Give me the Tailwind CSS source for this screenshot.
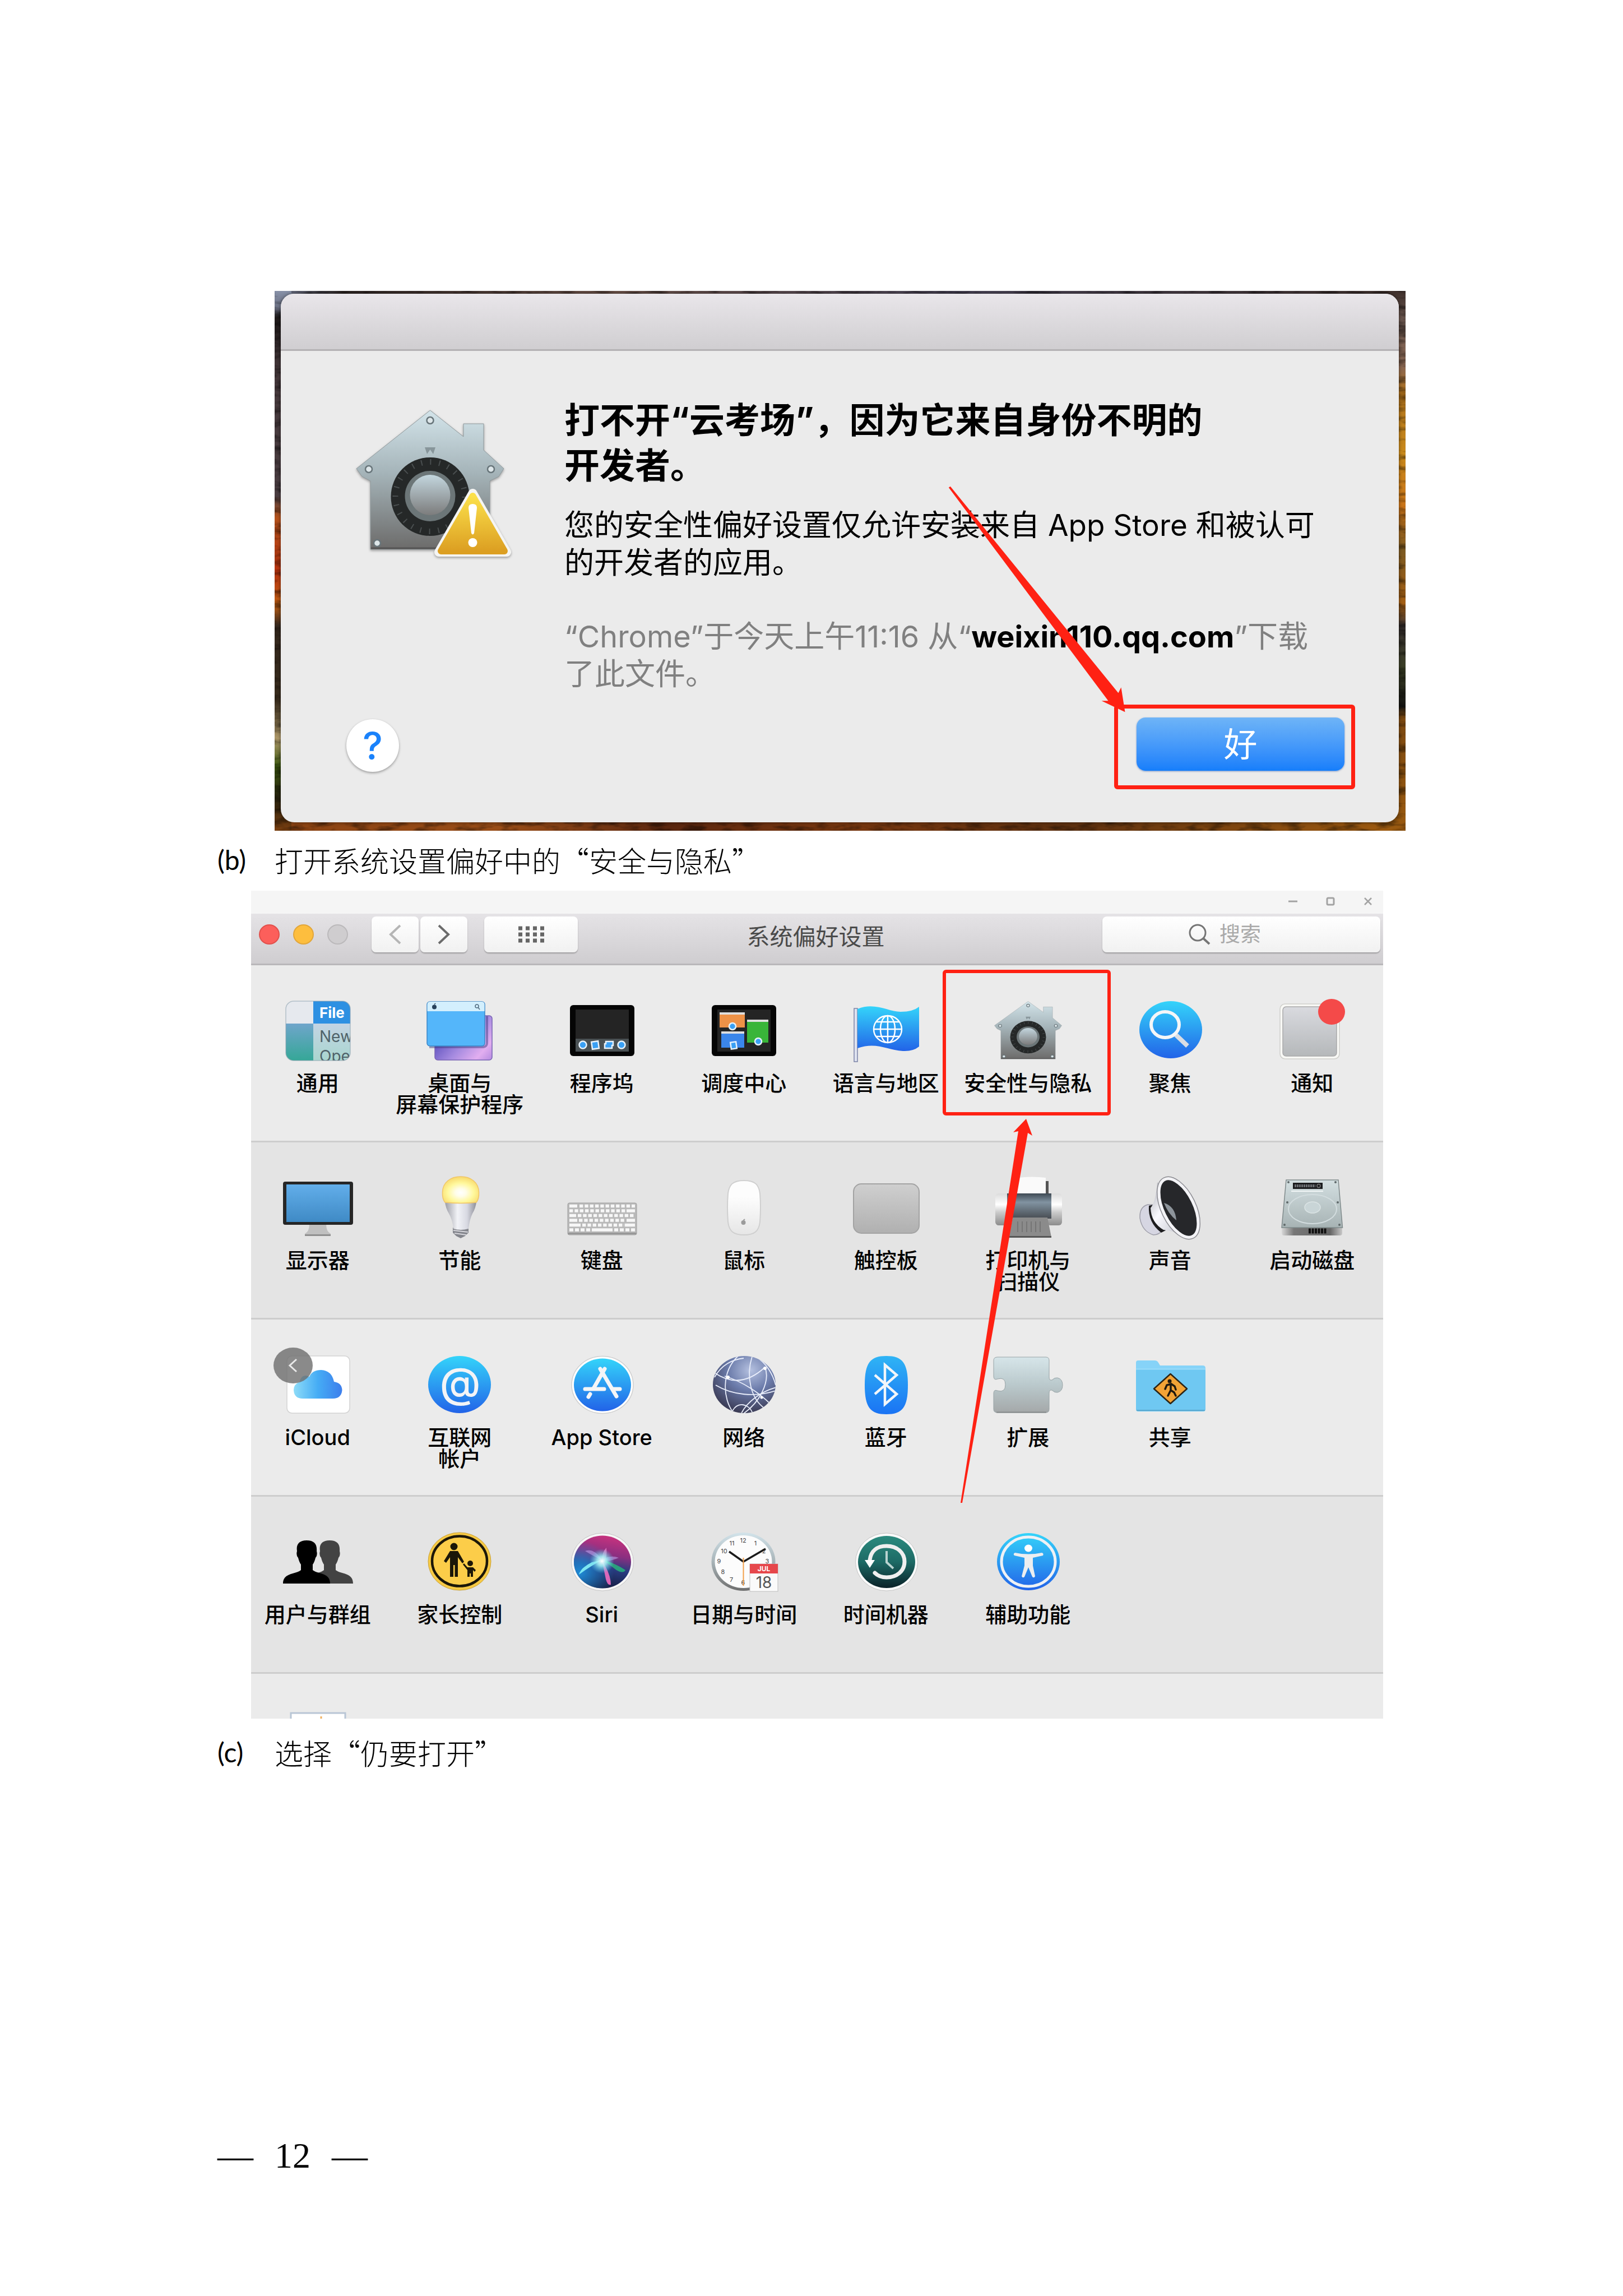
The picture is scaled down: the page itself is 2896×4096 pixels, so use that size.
<!DOCTYPE html>
<html lang="zh-CN">
<head>
    <meta charset="UTF-8">
    <meta name="viewport" content="width=device-width, initial-scale=1.0">
    <title>云考场安装说明 - 12</title>
    <script src="https://cdn.jsdelivr.net/npm/@tailwindcss/browser@4"></script>
</head>
<body class="bg-white text-black font-[Inter,'Noto_Sans_CJK_SC',sans-serif]">

    <!-- Shared gradients and symbols -->
    <svg class="absolute w-0 h-0" aria-hidden="true">
        <defs>
            <linearGradient id="blue" x1="0" y1="0" x2="0" y2="1"><stop offset="0" stop-color="#34d4fa"/><stop offset="1" stop-color="#2263e8"/></linearGradient>
            <linearGradient id="steel" x1="0" y1="0" x2="0" y2="1"><stop offset="0" stop-color="#d3e4ea"/><stop offset=".45" stop-color="#a5b4b9"/><stop offset="1" stop-color="#6c6b6a"/></linearGradient>
            <linearGradient id="knob" x1="0" y1="0" x2="0" y2="1"><stop offset="0" stop-color="#c3d6de"/><stop offset="1" stop-color="#7c7c7c"/></linearGradient>
            <linearGradient id="gray" x1="0" y1="0" x2="0" y2="1"><stop offset="0" stop-color="#cfcfcf"/><stop offset="1" stop-color="#b0b0b0"/></linearGradient>
            <linearGradient id="yellow" x1="0" y1="0" x2="0" y2="1"><stop offset="0" stop-color="#fbe04a"/><stop offset="1" stop-color="#dc9f22"/></linearGradient>
        </defs>
        <symbol id="house" viewBox="9 9 265 251" preserveAspectRatio="none">
            <path d="M141.500 10 L201 57 V34 H237 V81 L273 114 L264 128 L248 136 V258 H35 V136 L20 128 L10 114 Z" fill="url(#steel)" stroke="#8f999c" stroke-width="1"/>
            <path d="M36 256 H247" stroke="#555" stroke-width="3"/>
            <path d="M132 76 H151 L147 88 L141.500 80 L136 88 Z" fill="#87959a"/>
            <circle cx="141.500" cy="164" r="70" fill="#252828"/>
            <circle cx="141.500" cy="164" r="62" fill="none" stroke="#4a4f50" stroke-width="10" stroke-dasharray="2 14.200"/>
            <circle cx="141.500" cy="163" r="45" fill="#6c7678"/>
            <circle cx="141.500" cy="161" r="36" fill="url(#knob)"/>
            <g fill="#dde6e9" stroke="#68757a" stroke-width="2.500">
                <circle cx="141.500" cy="28" r="6"/><circle cx="32" cy="115" r="6"/><circle cx="250" cy="115" r="6"/><circle cx="47" cy="247" r="6"/><circle cx="236" cy="247" r="6"/>
            </g>
        </symbol>
    </svg>

    <main class="px-[388px] pt-[519px]">

        <!-- Gatekeeper alert -->
        <figure class="relative ml-[102px] pt-[5px] pr-3 pb-[15px] pl-[11px] bg-[#4a2b17]">
            <svg class="absolute inset-0 w-full h-full" viewBox="0 0 2018 964" preserveAspectRatio="none" aria-hidden="true">
                <defs>
                    <linearGradient id="wallL" x1="0" y1="0" x2="0" y2="1">
                        <stop offset="0" stop-color="#8791a8"/><stop offset=".03" stop-color="#6d7285"/><stop offset=".05" stop-color="#1f1a1a"/><stop offset=".15" stop-color="#46393c"/><stop offset=".38" stop-color="#4b3e42"/><stop offset=".42" stop-color="#b5521c"/><stop offset=".52" stop-color="#b8330f"/><stop offset=".58" stop-color="#c05f14"/><stop offset=".62" stop-color="#35281e"/><stop offset=".76" stop-color="#382c1d"/><stop offset=".83" stop-color="#b09a6a"/><stop offset=".88" stop-color="#3f5a12"/><stop offset=".94" stop-color="#26210e"/><stop offset="1" stop-color="#7a3f10"/>
                    </linearGradient>
                    <linearGradient id="wallR" x1="0" y1="0" x2="0" y2="1">
                        <stop offset="0" stop-color="#3f302c"/><stop offset=".06" stop-color="#6f5a52"/><stop offset=".14" stop-color="#8a6752"/><stop offset=".19" stop-color="#b0721c"/><stop offset=".3" stop-color="#c98a1c"/><stop offset=".4" stop-color="#c9741a"/><stop offset=".48" stop-color="#7c5a22"/><stop offset=".58" stop-color="#a55f14"/><stop offset=".62" stop-color="#3c3433"/><stop offset=".7" stop-color="#3a3f26"/><stop offset=".77" stop-color="#151412"/><stop offset=".79" stop-color="#7d4a12"/><stop offset="1" stop-color="#9a5a10"/>
                    </linearGradient>
                    <linearGradient id="wallT"><stop offset="0" stop-color="#77809a"/><stop offset=".06" stop-color="#2a2220"/><stop offset=".3" stop-color="#6b5148"/><stop offset=".6" stop-color="#494457"/><stop offset="1" stop-color="#3f302c"/></linearGradient>
                    <linearGradient id="wallB"><stop offset="0" stop-color="#8a4212"/><stop offset=".2" stop-color="#994d18"/><stop offset=".35" stop-color="#5a260f"/><stop offset=".5" stop-color="#7a3810"/><stop offset=".7" stop-color="#5d3010"/><stop offset="1" stop-color="#a05c10"/></linearGradient>
                    <filter id="grain" x="0" y="0" width="1" height="1"><feTurbulence type="fractalNoise" baseFrequency=".03 .09" numOctaves="3" seed="4"/><feColorMatrix values="0 0 0 0 0  0 0 0 0 0  0 0 0 0 0  0 0 0 3 -1.300"/></filter>
                </defs>
                <rect width="2018" height="12" fill="url(#wallT)"/>
                <rect y="940" width="2018" height="24" fill="url(#wallB)"/>
                <rect width="30" height="964" fill="url(#wallL)"/>
                <rect x="1988" width="30" height="964" fill="url(#wallR)"/>
                <rect width="2018" height="964" filter="url(#grain)" opacity=".4"/>
            </svg>

            <section class="relative rounded-[24px] overflow-hidden bg-[#ebebeb] shadow-[0_0_6px_rgba(0,0,0,0.5)]">
                <header class="h-[102px] border-b-3 border-[#b4b2b4] bg-linear-to-b from-[#e9e6ea] to-[#d0ced1]"></header>
                <div class="flex">
                    <div class="w-[506px] shrink-0 flex flex-col items-start justify-between pl-[117px] pt-24 pb-[90px]">
                        <svg class="ml-2 w-[300px] h-[280px] drop-shadow-[0_2px_2px_rgba(0,0,0,0.35)]" viewBox="0 0 300 280" role="img" aria-label="安全警告">
                            <use href="#house" x="9" y="9" width="265" height="251"/>
                            <circle cx="236" cy="247" r="9" fill="#6c6b6a"/>
                            <path d="M217.500 158 L278 263 H157 Z" fill="#f5f5f3" stroke="#f5f5f3" stroke-width="16" stroke-linejoin="round"/>
                            <path d="M217.500 163 L274 261 H161 Z" fill="url(#yellow)" stroke="url(#yellow)" stroke-width="12" stroke-linejoin="round"/>
                            <path d="M210 184 Q210 177 217.500 177 Q225 177 225 184 L220 229 Q217.500 234 215 229 Z" fill="#fff"/>
                            <circle cx="217.500" cy="246" r="8" fill="#fff"/>
                        </svg>
                        <button type="button" aria-label="帮助" class="w-[94px] h-[94px] rounded-full bg-white text-[#1a82fb] text-[68px] leading-none font-medium shadow-[0_2px_4px_rgba(0,0,0,0.35)]">?</button>
                    </div>
                    <div class="grow pt-[83px] pr-[97px] pb-[92px] flex flex-col items-start">
                        <h1 class="text-[63px] leading-[81px] font-bold whitespace-nowrap">打不开“云考场”，因为它来自身份不明的<br>开发者。</h1>
                        <p class="mt-[33px] text-[53px] leading-[67px] whitespace-nowrap">您的安全性偏好设置仅允许安装来自 App Store 和被认可<br>的开发者的应用。</p>
                        <p class="mt-16 text-[54px] leading-[67px] whitespace-nowrap text-[#808080]">“Chrome”于今天上午11:16 从“<b class="text-black">weixin110.qq.com</b>”下载<br>了此文件。</p>
                        <div class="relative mt-11 self-end">
                            <button type="button" class="block w-[371px] h-[95px] rounded-2xl bg-linear-to-b from-[#6eb4f7] to-[#157efb] text-white text-[60px] leading-none shadow-[0_1px_3px_rgba(0,60,160,0.5)]">好</button>
                            <span class="absolute -left-10 -right-[19px] -top-[23px] -bottom-[33px] border-7 border-[#ff2113] rounded-md pointer-events-none"></span>
                        </div>
                    </div>
                </div>
            </section>
            <svg class="absolute inset-0 w-full h-full pointer-events-none" viewBox="0 0 2018 964" aria-hidden="true">
                <path d="M1203 351 L1206 349 L1506 718 L1511 708 L1518 752 L1476 732 L1488 732 Z" fill="#ff2113"/>
            </svg>
        </figure>

        <p class="h-[107px] pb-1 flex items-center text-[51px] leading-[64px]">
            <span class="w-[102px] font-[Lato,sans-serif] text-[48px]">(b)</span>
            <span class="font-['Noto_Sans_CJK_SC',sans-serif] font-light">打开系统设置偏好中的“安全与隐私”</span>
        </p>

        <!-- System Preferences window -->
        <figure class="relative ml-[60px] mr-10 overflow-hidden bg-[#ebebeb]">
            <div class="h-[41px] bg-[#f5f5f5] flex justify-end items-center gap-[51px] pr-[19px] pb-1 text-[#a3a3a3]">
                <svg class="w-4 h-4" viewBox="0 0 16 16" fill="none" stroke="currentColor" stroke-width="3"><path d="M0 8 H16"/></svg>
                <svg class="w-4 h-4" viewBox="0 0 16 16" fill="none" stroke="currentColor" stroke-width="3"><rect x="2" y="2" width="12" height="12" rx="2"/></svg>
                <svg class="w-4 h-4" viewBox="0 0 16 16" fill="none" stroke="currentColor" stroke-width="2.500"><path d="M2 2 L14 14 M14 2 L2 14"/></svg>
            </div>

            <header class="h-[92px] grid grid-cols-[1fr_auto_1fr] items-start pt-[5px] pr-[5px] border-b-3 border-[#b9b7ba] bg-linear-to-b from-[#e5e3e6] to-[#cfcdd0]">
                <div class="h-16 flex items-center pl-[14px]">
                    <div class="flex gap-6">
                        <span class="w-[37px] h-9 rounded-[50%] bg-[#fc5f5b] border-2 border-[#e2504c]"></span>
                        <span class="w-[37px] h-9 rounded-[50%] bg-[#fdbe3e] border-2 border-[#e2a63a]"></span>
                        <span class="w-[37px] h-9 rounded-[50%] bg-[#cfcdcf] border-2 border-[#bbb9bb]"></span>
                    </div>
                    <button type="button" aria-label="后退" class="ml-[42px] w-[84px] h-16 rounded-lg bg-linear-to-b from-white to-[#f1f1f1] shadow-[0_2px_2px_rgba(0,0,0,0.25)] flex items-center justify-center">
                        <svg class="w-6 h-9" viewBox="0 0 24 36" fill="none" stroke="#b5b5b5" stroke-width="4"><path d="M21 2 L4 18 L21 34"/></svg>
                    </button>
                    <button type="button" aria-label="前进" class="ml-[3px] w-[84px] h-16 rounded-lg bg-linear-to-b from-white to-[#f1f1f1] shadow-[0_2px_2px_rgba(0,0,0,0.25)] flex items-center justify-center">
                        <svg class="w-6 h-9" viewBox="0 0 24 36" fill="none" stroke="#6b6b6b" stroke-width="4"><path d="M3 2 L20 18 L3 34"/></svg>
                    </button>
                    <button type="button" aria-label="显示全部" class="ml-[30px] w-[167px] h-16 rounded-lg bg-linear-to-b from-white to-[#f1f1f1] shadow-[0_2px_2px_rgba(0,0,0,0.25)] flex items-center justify-center">
                        <svg class="w-[46px] h-[30px]" viewBox="0 0 46 30" stroke="#666" stroke-width="7" stroke-dasharray="7 6"><path d="M0 4 H46 M0 15 H46 M0 26 H46"/></svg>
                    </button>
                </div>
                <h2 class="mt-1 text-[41px] leading-[64px] text-[#4a4a4a]">系统偏好设置</h2>
                <label class="justify-self-end w-[496px] h-16 rounded-lg bg-linear-to-b from-white to-[#f1f1f1] shadow-[0_2px_2px_rgba(0,0,0,0.25)] flex items-center pl-[153px] gap-4">
                    <svg class="w-10 h-10 shrink-0" viewBox="0 0 40 40" fill="none" stroke="#757575" stroke-width="3"><circle cx="17" cy="17" r="14"/><path d="M27 27 L38 37" stroke-width="4"/></svg>
                    <input type="search" aria-label="搜索" placeholder="搜索" class="w-60 h-16 bg-transparent outline-none text-[37px] leading-[64px] placeholder:text-[#a9a9a9]">
                </label>
            </header>

            <!-- Personal -->
            <div class="-ml-2 h-[316px] grid grid-cols-8 items-start border-b-3 border-[#cdcdcd]">
                <button type="button" class="pt-[51px] flex flex-col items-center gap-[10px] text-[38px] leading-[38px] font-medium whitespace-nowrap">
                    <svg class="w-40 h-[130px]" viewBox="0 0 160 130">
                        <defs>
                            <clipPath id="genClip"><rect x="23" y="13" width="115" height="106" rx="14"/></clipPath>
                            <linearGradient id="genL" x1="0" y1="0" x2="0" y2="1"><stop offset="0" stop-color="#6fa5cb"/><stop offset="1" stop-color="#35a797"/></linearGradient>
                            <linearGradient id="genR" x1="0" y1="0" x2="0" y2="1"><stop offset="0" stop-color="#c3d4e4"/><stop offset="1" stop-color="#a9d6cf"/></linearGradient>
                        </defs>
                        <g clip-path="url(#genClip)">
                            <rect x="23" y="13" width="49" height="40" fill="#e6e9ee"/>
                            <rect x="72" y="13" width="66" height="40" fill="#2d90e2"/>
                            <rect x="23" y="53" width="49" height="66" fill="url(#genL)"/>
                            <rect x="72" y="53" width="66" height="66" fill="url(#genR)"/>
                            <text x="83" y="43" font-size="26" font-weight="700" fill="#fff">File</text>
                            <text x="83" y="86" font-size="28" font-weight="400" fill="#4f6269">New</text>
                            <text x="83" y="121" font-size="28" font-weight="400" fill="#4f6269">Open</text>
                        </g>
                        <rect x="23" y="13" width="115" height="106" rx="14" fill="none" stroke="#8fa3b0" stroke-opacity=".6" stroke-width="1.500"/>
                    </svg>
                    <span>通用</span>
                </button>
                <button type="button" class="pt-[51px] flex flex-col items-center gap-[10px] text-[38px] leading-[38px] font-medium whitespace-nowrap">
                    <svg class="w-40 h-[130px]" viewBox="0 0 160 130">
                        <defs><linearGradient id="desk" x1="0" y1=".3" x2="1" y2="1"><stop offset=".2" stop-color="#6a5bc4"/><stop offset=".5" stop-color="#a68be0"/><stop offset=".8" stop-color="#e2aef0"/><stop offset="1" stop-color="#b58be0"/></linearGradient></defs>
                        <rect x="36" y="39" width="102" height="79" rx="5" fill="url(#desk)" stroke="#7a64b5" stroke-width="1.500"/>
                        <path d="M26 95 H122 Q129 94 129 88 V40" fill="none" stroke="#3a3578" stroke-opacity=".45" stroke-width="4"/>
                        <rect x="22" y="14" width="103" height="79" rx="5" fill="#54b6fa" stroke="#3a86c8" stroke-width="1.500"/>
                        <path d="M22.500 31 V19 Q22.500 14 28 14 H119 Q124.500 14 124.500 19 V31 Z" fill="#d3effd"/>
                        <ellipse cx="35" cy="23.500" rx="4" ry="4" fill="#27425c"/><path d="M35 19 L37 17" stroke="#27425c" stroke-width="1.500"/>
                        <circle cx="111" cy="22" r="3" fill="none" stroke="#536d80" stroke-width="1.500"/><path d="M113 24 L116 28" stroke="#536d80" stroke-width="1.500"/>
                    </svg>
                    <span>桌面与<br>屏幕保护程序</span>
                </button>
                <button type="button" class="pt-[51px] flex flex-col items-center gap-[10px] text-[38px] leading-[38px] font-medium whitespace-nowrap">
                    <svg class="w-40 h-[130px]" viewBox="0 0 160 130">
                        <rect x="23" y="20" width="115" height="91" rx="6" fill="#050505"/>
                        <rect x="33" y="28" width="95" height="75" fill="#242424"/>
                        <rect x="33" y="80" width="95" height="23" fill="#4a5154"/>
                        <g fill="#3aa0f4" stroke="#e8f2fa" stroke-width="2.500">
                            <circle cx="46" cy="91" r="6.500"/><rect x="62" y="85" width="12" height="13" transform="rotate(-8 68 91)"/>
                            <path d="M87 85 H100 V92 H98 V97 H85 V89 H87 Z"/><circle cx="115" cy="91" r="6.500"/>
                        </g>
                    </svg>
                    <span>程序坞</span>
                </button>
                <button type="button" class="pt-[51px] flex flex-col items-center gap-[10px] text-[38px] leading-[38px] font-medium whitespace-nowrap">
                    <svg class="w-40 h-[130px]" viewBox="0 0 160 130">
                        <rect x="23" y="20" width="115" height="91" rx="6" fill="#050505"/>
                        <rect x="33" y="28" width="95" height="75" fill="#242424"/>
                        <rect x="37" y="33" width="45" height="27" fill="#ee9247"/><rect x="37" y="33" width="45" height="4" fill="#dedede"/>
                        <rect x="86" y="46" width="38" height="41" fill="#39b539"/><rect x="86" y="46" width="38" height="4" fill="#dedede"/>
                        <rect x="40" y="67" width="41" height="29" fill="#3b86ea"/><rect x="40" y="67" width="41" height="4" fill="#dedede"/>
                        <g fill="#3aa0f4" stroke="#e8f2fa" stroke-width="2.500"><circle cx="60" cy="58" r="6"/><circle cx="106" cy="85" r="6"/><rect x="57" y="86" width="10" height="12" transform="rotate(-8 62 92)"/></g>
                    </svg>
                    <span>调度中心</span>
                </button>
                <button type="button" class="pt-[51px] flex flex-col items-center gap-[10px] text-[38px] leading-[38px] font-medium whitespace-nowrap">
                    <svg class="w-40 h-[130px]" viewBox="0 0 160 130">
                        <rect x="23" y="26" width="6" height="95" fill="#dfe3f0" stroke="#7b83a6" stroke-width="1.500"/>
                        <path d="M29 27 C60 14 84 32 106 32 Q128 32 139 23 V94 Q128 103 110 102 C82 100 62 85 29 97 Z" fill="url(#blue)"/>
                        <g fill="none" stroke="#fff" stroke-width="2.500">
                            <ellipse cx="83" cy="63" rx="25" ry="24"/><ellipse cx="83" cy="63" rx="13" ry="24"/><path d="M83 39 V87 M58 63 H108 M62 50 H104 M62 76 H104"/>
                        </g>
                    </svg>
                    <span>语言与地区</span>
                </button>
                <button type="button" class="relative pt-[51px] flex flex-col items-center gap-[10px] text-[38px] leading-[38px] font-medium whitespace-nowrap">
                    <svg class="w-40 h-[130px]" viewBox="0 0 160 130"><use href="#house" x="20" y="13" width="121" height="104"/></svg>
                    <span>安全性与隐私</span>
                    <span class="absolute -left-[26px] top-2 w-[300px] h-[260px] border-6 border-[#ff2113] rounded-md"></span>
                </button>
                <button type="button" class="pt-[51px] flex flex-col items-center gap-[10px] text-[38px] leading-[38px] font-medium whitespace-nowrap">
                    <svg class="w-40 h-[130px]" viewBox="0 0 160 130">
                        <ellipse cx="81" cy="64" rx="56" ry="51" fill="url(#blue)"/>
                        <path d="M90 73 L111 93" stroke="#d9dde4" stroke-width="8"/>
                        <ellipse cx="71" cy="55" rx="25" ry="23" fill="none" stroke="#f4f6f8" stroke-width="6"/>
                    </svg>
                    <span>聚焦</span>
                </button>
                <button type="button" class="pt-[51px] flex flex-col items-center gap-[10px] text-[38px] leading-[38px] font-medium whitespace-nowrap">
                    <svg class="w-40 h-[130px]" viewBox="0 0 160 130">
                        <defs><linearGradient id="note" x1="0" y1="0" x2="0" y2="1"><stop offset="0" stop-color="#d9dadf"/><stop offset="1" stop-color="#b5b8ba"/></linearGradient></defs>
                        <rect x="23" y="18" width="106" height="98" rx="9" fill="#f8f8f5" stroke="#cfcfcb" stroke-width="1.500"/>
                        <rect x="28" y="23" width="96" height="88" rx="6" fill="url(#note)" stroke="#a9a9aa" stroke-width="1.500"/>
                        <ellipse cx="115" cy="32" rx="24" ry="23" fill="#f44a49"/>
                    </svg>
                    <span>通知</span>
                </button>
            </div>

            <!-- Hardware -->
            <div class="-ml-2 h-[316px] grid grid-cols-8 items-start border-b-3 border-[#cdcdcd] bg-[#e4e4e4]">
                <button type="button" class="pt-[51px] flex flex-col items-center gap-[10px] text-[38px] leading-[38px] font-medium whitespace-nowrap">
                    <svg class="w-40 h-[130px]" viewBox="0 0 160 130">
                        <defs><linearGradient id="scr" x1="0" y1="0" x2="0" y2="1"><stop offset="0" stop-color="#62aeea"/><stop offset="1" stop-color="#3f8ac5"/></linearGradient></defs>
                        <path d="M65 95 H95 Q95 108 103 112 V116 H57 V112 Q65 108 65 95 Z" fill="#c0c0c0"/><path d="M57 114.500 H103" stroke="#8f8f8f" stroke-width="3"/>
                        <rect x="18" y="19" width="125" height="77" rx="4" fill="#262626"/>
                        <rect x="24" y="24" width="113" height="67" fill="url(#scr)"/>
                    </svg>
                    <span>显示器</span>
                </button>
                <button type="button" class="pt-[51px] flex flex-col items-center gap-[10px] text-[38px] leading-[38px] font-medium whitespace-nowrap">
                    <svg class="w-40 h-[130px]" viewBox="0 0 160 130">
                        <defs>
                            <radialGradient id="glow" cx=".5" cy=".6" r=".6"><stop offset="0" stop-color="#fff"/><stop offset=".25" stop-color="#fffde8"/><stop offset=".6" stop-color="#fff89c"/><stop offset="1" stop-color="#f8d86a"/></radialGradient>
                            <linearGradient id="cone"><stop offset="0" stop-color="#9c9da5"/><stop offset=".4" stop-color="#f2f3f7"/><stop offset=".7" stop-color="#d8d9e2"/><stop offset="1" stop-color="#8e8f98"/></linearGradient>
                        </defs>
                        <path d="M68 101 H96 V110 L90 116 L82 120 L74 116 L68 110 Z" fill="#83858c"/><path d="M69 106 L95 109 M71 111 L92 114" stroke="#d7d7dc" stroke-width="2"/>
                        <path d="M54 55 H110 Q109 66 103 76 Q98 86 96 103 Q82 107 69 103 Q67 86 61 76 Q55 66 54 55 Z" fill="url(#cone)"/>
                        <path d="M54 56 Q49 50 49.500 38 C50 20 64 10 82 10 C100 10 114 20 114.500 38 Q115 50 110 56 Q82 59 54 56 Z" fill="url(#glow)" stroke="#f0c668" stroke-width="1.500"/>
                    </svg>
                    <span>节能</span>
                </button>
                <button type="button" class="pt-[51px] flex flex-col items-center gap-[10px] text-[38px] leading-[38px] font-medium whitespace-nowrap">
                    <svg class="w-40 h-[130px]" viewBox="0 0 160 130">
                        <rect x="19" y="57" width="123" height="57" rx="3" fill="#b9b9b9" stroke="#a0a0a0" stroke-width="1"/>
                        <path d="M19.500 111.500 H141.500" stroke="#989898" stroke-width="3"/>
                        <g stroke="#f7f7f7" stroke-width="5.500">
                            <path d="M22 62.500 H36"/><path d="M40 62.500 H139" stroke-dasharray="6.400 2.900"/>
                            <path d="M22 71 H122" stroke-dasharray="6.400 2.900"/><path d="M124 71 H139"/>
                            <path d="M22 79.500 H34"/><path d="M37 79.500 H139" stroke-dasharray="6.400 2.900"/>
                            <path d="M22 88 H36"/><path d="M39 88 H122" stroke-dasharray="6.400 2.900"/><path d="M124 88 H139"/>
                            <path d="M22 96.500 H42"/><path d="M45 96.500 H120" stroke-dasharray="6.400 2.900"/><path d="M121 96.500 H139"/>
                            <path d="M22 105 H60" stroke-dasharray="7 3"/><path d="M62 105 H99"/><path d="M102 105 H139" stroke-dasharray="7 3"/>
                        </g>
                    </svg>
                    <span>键盘</span>
                </button>
                <button type="button" class="pt-[51px] flex flex-col items-center gap-[10px] text-[38px] leading-[38px] font-medium whitespace-nowrap">
                    <svg class="w-40 h-[130px]" viewBox="0 0 160 130">
                        <defs><linearGradient id="mouse" x1="0" y1="0" x2="0" y2="1"><stop offset=".3" stop-color="#fdfdfd"/><stop offset="1" stop-color="#e6e6e6"/></linearGradient></defs>
                        <path d="M80.500 17 C101 17 107 25 109 40 Q111 65 109 91 C107 107 100 114 80.500 114 C61 114 54 107 52 91 Q50 65 52 40 C54 25 60 17 80.500 17 Z" fill="url(#mouse)" stroke="#cfcfcf" stroke-width="2"/>
                        <ellipse cx="79.500" cy="92" rx="4" ry="4" fill="#9b9b9b"/><path d="M79.500 88 L82 86" stroke="#9b9b9b" stroke-width="2"/>
                    </svg>
                    <span>鼠标</span>
                </button>
                <button type="button" class="pt-[51px] flex flex-col items-center gap-[10px] text-[38px] leading-[38px] font-medium whitespace-nowrap">
                    <svg class="w-40 h-[130px]" viewBox="0 0 160 130"><rect x="22" y="23" width="117" height="88" rx="14" fill="url(#gray)" stroke="#a3a3a3" stroke-width="2"/></svg>
                    <span>触控板</span>
                </button>
                <button type="button" class="pt-[51px] flex flex-col items-center gap-[10px] text-[38px] leading-[38px] font-medium whitespace-nowrap">
                    <svg class="w-40 h-[130px]" viewBox="0 0 160 130">
                        <defs>
                            <linearGradient id="prtS" x1="0" y1="0" x2="0" y2="1"><stop offset="0" stop-color="#dcdcdc"/><stop offset=".35" stop-color="#fff"/><stop offset=".6" stop-color="#c9c9c9"/><stop offset="1" stop-color="#8c8c8c"/></linearGradient>
                            <linearGradient id="prtM" x1="0" y1="0" x2="0" y2="1"><stop offset="0" stop-color="#3f4a54"/><stop offset=".35" stop-color="#8193a1"/><stop offset="1" stop-color="#474c52"/></linearGradient>
                        </defs>
                        <rect x="110" y="18" width="7" height="24" fill="#555"/>
                        <path d="M50 14 Q82 8 112 12 V44 H48 Z" fill="#fafafa"/>
                        <rect x="22" y="40" width="28" height="57" rx="6" fill="url(#prtS)"/><rect x="114" y="40" width="27" height="57" rx="6" fill="url(#prtS)"/>
                        <rect x="43" y="40" width="79" height="45" fill="url(#prtM)"/>
                        <path d="M53 83 H115 L122 118 H46 Z" fill="#8b8b8b"/><path d="M46 117.500 H122" stroke="#565656" stroke-width="3"/>
                        <path d="M62 90 V109 M70 90 V109 M78 90 V109 M86 90 V109 M94 90 V109 M102 90 V109" stroke="#757575" stroke-width="2"/>
                    </svg>
                    <span>打印机与<br>扫描仪</span>
                </button>
                <button type="button" class="pt-[51px] flex flex-col items-center gap-[10px] text-[38px] leading-[38px] font-medium whitespace-nowrap">
                    <svg class="w-40 h-[130px]" viewBox="0 0 160 130">
                        <defs><linearGradient id="spk" x1="0" y1="0" x2="1" y2="1"><stop offset="0" stop-color="#a9aab2"/><stop offset=".4" stop-color="#fafaff"/><stop offset="1" stop-color="#b2b3bd"/></linearGradient></defs>
                        <path d="M40 60 Q25 64 26 84 Q30 108 50 114 Q60 114 66 106 L48 60 Z" fill="#d6d6e2" stroke="#9d9da8" stroke-width="1.500"/>
                        <path d="M42 62 Q40 92 64 110 L72 106 L50 60 Z" fill="#1d1d1f"/>
                        <path d="M57 20 Q54 56 45 66 Q46 92 68 105 Q92 108 114 118 L92 60 Z" fill="url(#spk)"/>
                        <ellipse cx="95" cy="66" rx="28" ry="57" transform="rotate(-26 95 66)" fill="#26272a" stroke="#f3f3f6" stroke-width="6"/>
                        <ellipse cx="95" cy="66" rx="31" ry="60" transform="rotate(-26 95 66)" fill="none" stroke="#8a8a90" stroke-width="1.500"/>
                        <path d="M69 57 Q89 63 91 88 Q76 76 69 57 Z" fill="#8d949b"/>
                    </svg>
                    <span>声音</span>
                </button>
                <button type="button" class="pt-[51px] flex flex-col items-center gap-[10px] text-[38px] leading-[38px] font-medium whitespace-nowrap">
                    <svg class="w-40 h-[130px]" viewBox="0 0 160 130">
                        <defs>
                            <linearGradient id="hdd" x1="0" y1="0" x2="0" y2="1"><stop offset="0" stop-color="#d3dfe1"/><stop offset="1" stop-color="#a7b3b4"/></linearGradient>
                            <linearGradient id="hddF"><stop offset="0" stop-color="#d8d8d8"/><stop offset=".2" stop-color="#777"/><stop offset=".8" stop-color="#666"/><stop offset="1" stop-color="#c8c8c8"/></linearGradient>
                        </defs>
                        <path d="M26 100 H134 V111 Q134 115 130 115 H30 Q26 115 26 111 Z" fill="url(#hddF)"/><path d="M74 107 H107" stroke="#111" stroke-width="9" stroke-dasharray="4 1.500"/>
                        <path d="M34 16 H127 L134.500 101 H26 Z" fill="url(#hdd)" stroke="#7f8a8b" stroke-width="1.500"/>
                        <rect x="46" y="21" width="53" height="11" fill="#1a1c1e"/><path d="M49 26.500 H86" stroke="#6b6f73" stroke-width="5" stroke-dasharray="3 1"/><circle cx="92" cy="26.500" r="3" fill="none" stroke="#777" stroke-width="1.500"/>
                        <path d="M43 36 H100" stroke="#f1f6f6" stroke-width="2"/>
                        <ellipse cx="81" cy="68" rx="43" ry="26" fill="none" stroke="#d3dddf" stroke-width="2"/><ellipse cx="81" cy="65" rx="14" ry="10" fill="#c9d5d7" stroke="#dbe4e5" stroke-width="1.500"/>
                        <g fill="#5f6869"><circle cx="38" cy="20" r="2"/><circle cx="122" cy="20" r="2"/><circle cx="36" cy="56" r="2"/><circle cx="126" cy="56" r="2"/><circle cx="31" cy="96" r="2"/><circle cx="129" cy="96" r="2"/></g>
                    </svg>
                    <span>启动磁盘</span>
                </button>
            </div>

            <!-- Internet & wireless -->
            <div class="-ml-2 h-[316px] grid grid-cols-8 items-start border-b-3 border-[#cdcdcd]">
                <button type="button" class="pt-[51px] flex flex-col items-center gap-[10px] text-[38px] leading-[38px] font-medium whitespace-nowrap">
                    <svg class="w-40 h-[130px] overflow-visible" viewBox="0 0 160 130">
                        <defs><linearGradient id="cloud"><stop offset="0" stop-color="#8edcf8"/><stop offset=".5" stop-color="#45acf5"/><stop offset="1" stop-color="#3d7eec"/></linearGradient></defs>
                        <rect x="25" y="14" width="112" height="102" rx="9" fill="#fff" stroke="#d3d3d3" stroke-width="1.500"/>
                        <path d="M53 90 Q38 90 37 75 Q37 64 48 60 Q49 50 58 49 Q62 49 65 51 Q70 39 86 39 Q105 40 109 60 Q123 62 123.500 75 Q122 90 107 90 Z" fill="url(#cloud)"/>
                        <ellipse cx="36" cy="31" rx="35" ry="32" fill="#6d6d6d" fill-opacity=".8"/>
                        <path d="M42 20 L30 31 L42 42" fill="none" stroke="#e8e8e8" stroke-width="3"/>
                    </svg>
                    <span>iCloud</span>
                </button>
                <button type="button" class="pt-[51px] flex flex-col items-center gap-[10px] text-[38px] leading-[38px] font-medium whitespace-nowrap">
                    <svg class="w-40 h-[130px]" viewBox="0 0 160 130">
                        <ellipse cx="80" cy="65" rx="56" ry="51" fill="url(#blue)"/>
                        <text x="81" y="88" font-size="74" font-weight="500" text-anchor="middle" fill="#f3f4f6">@</text>
                    </svg>
                    <span>互联网<br>帐户</span>
                </button>
                <button type="button" class="pt-[51px] flex flex-col items-center gap-[10px] text-[38px] leading-[38px] font-medium whitespace-nowrap">
                    <svg class="w-40 h-[130px]" viewBox="0 0 160 130">
                        <ellipse cx="81" cy="65.500" rx="55" ry="51" fill="#fff" stroke="#cfcfcf" stroke-width="1.500"/>
                        <ellipse cx="81" cy="65.500" rx="51" ry="47" fill="url(#blue)"/>
                        <g stroke="#f4f5f7" stroke-width="7" stroke-linecap="round" fill="none">
                            <path d="M85 37 L65 72"/><path d="M77 37 L106 86"/><path d="M50 73 H84 M99 73 H112"/><path d="M59 82 L56 87"/>
                        </g>
                    </svg>
                    <span>App Store</span>
                </button>
                <button type="button" class="pt-[51px] flex flex-col items-center gap-[10px] text-[38px] leading-[38px] font-medium whitespace-nowrap">
                    <svg class="w-40 h-[130px]" viewBox="0 0 160 130">
                        <defs>
                            <radialGradient id="net" cx=".6" cy=".25" r=".8"><stop offset="0" stop-color="#b5c1e0"/><stop offset=".45" stop-color="#6b7baa"/><stop offset="1" stop-color="#35344c"/></radialGradient>
                            <clipPath id="netClip"><ellipse cx="81" cy="65" rx="56" ry="51"/></clipPath>
                        </defs>
                        <ellipse cx="81" cy="65" rx="56" ry="51" fill="url(#net)"/>
                        <g clip-path="url(#netClip)" fill="none" stroke="#e9eefb" stroke-width="1.800">
                            <path d="M70 14 C40 42 42 90 62 116"/><path d="M95 15 C84 50 92 90 118 108"/><path d="M28 44 C60 66 90 60 118 34"/>
                            <path d="M30 66 C60 84 100 88 137 76"/><path d="M46 50 C80 60 110 82 128 100"/><path d="M118 34 C128 60 108 98 78 118"/><path d="M76 116 C86 96 110 78 138 70"/><path d="M28 52 C40 30 60 20 80 18"/><path d="M100 14 C120 26 132 46 137 66"/><path d="M60 112 C70 94 90 100 96 116"/>
                        </g>
                        <g fill="#fff"><circle cx="52" cy="52" r="3"/><circle cx="118" cy="36" r="3"/><circle cx="112" cy="88" r="2.500"/></g>
                    </svg>
                    <span>网络</span>
                </button>
                <button type="button" class="pt-[51px] flex flex-col items-center gap-[10px] text-[38px] leading-[38px] font-medium whitespace-nowrap">
                    <svg class="w-40 h-[130px]" viewBox="0 0 160 130">
                        <defs><linearGradient id="bt" x1="0" y1="0" x2="0" y2="1"><stop offset="0" stop-color="#2fb4f5"/><stop offset="1" stop-color="#1a73f4"/></linearGradient></defs>
                        <path d="M80.500 14 C109 14 119 26 119 66 C119 106 109 118 80.500 118 C52 118 42 106 42 66 C42 26 52 14 80.500 14 Z" fill="url(#bt)"/>
                        <path d="M60 48 L99 82 L78 100 V30 L99 48 L60 82" fill="none" stroke="#f2f6fa" stroke-width="4.500"/>
                    </svg>
                    <span>蓝牙</span>
                </button>
                <button type="button" class="pt-[51px] flex flex-col items-center gap-[10px] text-[38px] leading-[38px] font-medium whitespace-nowrap">
                    <svg class="w-40 h-[130px]" viewBox="0 0 160 130">
                        <defs><linearGradient id="ext" x1="0" y1="0" x2="0" y2="1"><stop offset="0" stop-color="#d6e5e9"/><stop offset=".5" stop-color="#bac9cc"/><stop offset="1" stop-color="#a4a8a9"/></linearGradient></defs>
                        <path d="M26 16 H112 Q118 16 118 22 V52 Q118 58 123 57 Q128 52 133 53 Q142 55 142 66 Q142 77 133 79 Q128 80 123 75 Q118 74 118 80 V109 Q118 115 112 115 H26 Q19 115 19 109 V81 Q19 73 26 76 Q40 80 40 65 Q40 51 26 55 Q19 58 19 50 V22 Q19 16 26 16 Z" fill="url(#ext)" stroke="#97a3a6" stroke-width="1"/>
                        <path d="M24 114.500 H113" stroke="#85898a" stroke-width="2"/>
                    </svg>
                    <span>扩展</span>
                </button>
                <button type="button" class="pt-[51px] flex flex-col items-center gap-[10px] text-[38px] leading-[38px] font-medium whitespace-nowrap">
                    <svg class="w-40 h-[130px]" viewBox="0 0 160 130">
                        <path d="M19 26 Q19 22 23 22 H52 Q57 22 59 26 L62 31 H138 Q143 31 143 36 V50 H19 Z" fill="#86d3f8"/>
                        <rect x="19" y="37" width="124" height="76" rx="4" fill="#6fc8f2"/><path d="M20 111 H142" stroke="#5aa9cf" stroke-width="2"/><path d="M19.500 37.500 H142.500" stroke="#a4e0fb" stroke-width="1.500"/>
                        <path d="M80.500 46 L110 72.500 L80.500 99 L51 72.500 Z" fill="#f2a336" stroke="#2d2415" stroke-width="2.500" stroke-linejoin="round"/>
                        <circle cx="79" cy="59" r="3.500" fill="#221a0e"/>
                        <path d="M71 73 L74 66 L82 64 L88 68 L90 74 M81 64 V75 L76 85 M81 75 L87 79 L90 85" fill="none" stroke="#221a0e" stroke-width="3.500" stroke-linecap="round"/>
                    </svg>
                    <span>共享</span>
                </button>
            </div>

            <!-- System -->
            <div class="-ml-2 h-[316px] grid grid-cols-8 items-start border-b-3 border-[#cdcdcd] bg-[#e4e4e4]">
                <button type="button" class="pt-[51px] flex flex-col items-center gap-[10px] text-[38px] leading-[38px] font-medium whitespace-nowrap">
                    <svg class="w-40 h-[130px]" viewBox="0 0 160 130">
                        <path d="M101 27 C115 27 120 34 119 46 Q121 54 117 58 Q115 66 112 70 V80 C122 88 143 84 143 104 H60 C60 84 82 88 91 80 V70 Q88 66 86 58 Q82 54 84 46 C82 34 88 27 101 27 Z" fill="#434343"/>
                        <path d="M60 27 C74 27 79 34 78 46 Q80 54 76 58 Q74 66 71 70 V80 C81 88 102 84 102 104 H18 C18 84 41 88 50 80 V70 Q47 66 45 58 Q41 54 43 46 C41 34 47 27 60 27 Z" fill="#000"/>
                    </svg>
                    <span>用户与群组</span>
                </button>
                <button type="button" class="pt-[51px] flex flex-col items-center gap-[10px] text-[38px] leading-[38px] font-medium whitespace-nowrap">
                    <svg class="w-40 h-[130px]" viewBox="0 0 160 130">
                        <ellipse cx="80" cy="64.500" rx="56" ry="51.500" fill="#f6c944" stroke="#c9a23a" stroke-width="1"/>
                        <ellipse cx="80" cy="64" rx="49" ry="44.500" fill="#fccd49" stroke="#1c1708" stroke-width="4.500"/>
                        <g fill="#1c1708">
                            <circle cx="70" cy="38" r="6.500"/><path d="M63 46 H77 L88 65 L85 68 L77 57 V92 H71.500 V71 H69 V92 H63 V57 L56 67 L52 64 Z"/>
                            <circle cx="99" cy="68" r="5"/><path d="M94 75 L88 68 L86 70 L94 80 V92 H98 V86 H100 V92 H104 V80 L107 83 L109 80 L104 75 Z"/>
                        </g>
                    </svg>
                    <span>家长控制</span>
                </button>
                <button type="button" class="pt-[51px] flex flex-col items-center gap-[10px] text-[38px] leading-[38px] font-medium whitespace-nowrap">
                    <svg class="w-40 h-[130px]" viewBox="0 0 160 130">
                        <defs>
                            <linearGradient id="siri" x1=".6" y1="0" x2=".4" y2="1"><stop offset="0" stop-color="#c8327e"/><stop offset=".35" stop-color="#8a2f80"/><stop offset=".6" stop-color="#283c80"/><stop offset="1" stop-color="#141a3c"/></linearGradient>
                            <radialGradient id="siriL" cx=".1" cy=".7" r=".6"><stop offset="0" stop-color="#1e8ad6"/><stop offset="1" stop-color="#1e8ad6" stop-opacity="0"/></radialGradient>
                            <radialGradient id="siriC"><stop offset="0" stop-color="#fff"/><stop offset=".4" stop-color="#a5f4f6" stop-opacity=".85"/><stop offset="1" stop-color="#5ad0f0" stop-opacity="0"/></radialGradient>
                        </defs>
                        <ellipse cx="81" cy="65.500" rx="55.500" ry="51.500" fill="#f6f6f6" stroke="#c3c3c3" stroke-width="1"/>
                        <ellipse cx="81" cy="65.500" rx="51" ry="47" fill="url(#siri)"/><ellipse cx="81" cy="65.500" rx="51" ry="47" fill="url(#siriL)"/>
                        <path d="M82 62 Q104 68 122 80 Q118 87 106 80 Z" fill="#27b27c" fill-opacity=".85"/>
                        <path d="M80 62 Q96 88 96 106 Q90 108 87 96 Z" fill="#ee6cc0" fill-opacity=".9"/>
                        <path d="M80 62 Q58 74 39 88 Q42 76 62 66 Z" fill="#86f2f6" fill-opacity=".9"/>
                        <path d="M50 46 Q66 40 80 62 Q94 52 110 58 Q92 66 80 62 Q70 58 50 46 Z" fill="#c6a4ee" fill-opacity=".55"/>
                        <path d="M80 64 Q80 48 88 40 Q90 56 84 66 Z" fill="#f08ad0" fill-opacity=".7"/>
                        <circle cx="80" cy="64" r="22" fill="url(#siriC)"/>
                    </svg>
                    <span>Siri</span>
                </button>
                <button type="button" class="pt-[51px] flex flex-col items-center gap-[10px] text-[38px] leading-[38px] font-medium whitespace-nowrap">
                    <svg class="w-40 h-[130px]" viewBox="0 0 160 130">
                        <defs><linearGradient id="rim" x1="0" y1="0" x2="0" y2="1"><stop offset="0" stop-color="#d2e3ea"/><stop offset=".5" stop-color="#a8b4b8"/><stop offset="1" stop-color="#6e6e6e"/></linearGradient></defs>
                        <ellipse cx="79.500" cy="65" rx="57" ry="52" fill="url(#rim)"/><ellipse cx="79.500" cy="65" rx="51" ry="47" fill="#fcfcfc"/>
                        <g font-size="11" fill="#444" text-anchor="middle" font-weight="400">
                            <text x="79" y="31">12</text><text x="101" y="36">1</text><text x="116" y="50">2</text><text x="122" y="68">3</text><text x="79" y="106">6</text><text x="58" y="101">7</text><text x="43" y="87">8</text><text x="36" y="68">9</text><text x="45" y="50">10</text><text x="59" y="36">11</text>
                        </g>
                        <path d="M79.500 65 L54 47 M79.500 65 L119 42" stroke="#1a1a1a" stroke-width="3.500"/><path d="M79.500 58 V108" stroke="#f3a04a" stroke-width="2"/>
                        <rect x="91" y="69" width="50" height="49" fill="#fafafa" stroke="#bdbdbd" stroke-width="1"/><rect x="91" y="69" width="50" height="17" fill="#e6474b"/>
                        <text x="116" y="82" font-size="12" font-weight="700" fill="#fff" text-anchor="middle">JUL</text>
                        <text x="116" y="112" font-size="28" font-weight="400" fill="#555" text-anchor="middle">18</text>
                    </svg>
                    <span>日期与时间</span>
                </button>
                <button type="button" class="pt-[51px] flex flex-col items-center gap-[10px] text-[38px] leading-[38px] font-medium whitespace-nowrap">
                    <svg class="w-40 h-[130px]" viewBox="0 0 160 130">
                        <defs><linearGradient id="tm" x1="0" y1="0" x2="0" y2="1"><stop offset="0" stop-color="#2b8a7e"/><stop offset=".5" stop-color="#1d6a65"/><stop offset="1" stop-color="#0a2128"/></linearGradient></defs>
                        <ellipse cx="81" cy="65.500" rx="55.500" ry="51.500" fill="#fafafa" stroke="#c3c3c3" stroke-width="1"/><ellipse cx="81" cy="65.500" rx="51" ry="46.500" fill="url(#tm)"/>
                        <path d="M51 62 C53 46 64 37 81 37 C100 37 113 49 113 65 C113 82 99 93 81 93 Q68 93 60 85" fill="none" stroke="#efefef" stroke-width="7" stroke-linecap="round"/>
                        <path d="M42 62 H60 L51 76 Z" fill="#fff"/>
                        <path d="M81 46 V66 L93 77" fill="none" stroke="#b9d3d0" stroke-width="4"/>
                    </svg>
                    <span>时间机器</span>
                </button>
                <button type="button" class="pt-[51px] flex flex-col items-center gap-[10px] text-[38px] leading-[38px] font-medium whitespace-nowrap">
                    <svg class="w-40 h-[130px]" viewBox="0 0 160 130">
                        <ellipse cx="81" cy="65" rx="56" ry="51" fill="url(#blue)"/><ellipse cx="81" cy="65" rx="48" ry="44" fill="none" stroke="#eef1f5" stroke-width="5"/>
                        <ellipse cx="81" cy="41" rx="7" ry="6.500" fill="#fff"/>
                        <path d="M57 49 Q81 54 105 49 Q109 50 107 54 L89 58 V72 L93 91 Q91 95 88 92 L81 75 L74 92 Q71 95 69 91 L74 72 V58 L56 54 Q53 51 57 49 Z" fill="#eceef0"/>
                    </svg>
                    <span>辅助功能</span>
                </button>
            </div>

            <div class="-ml-2 h-20 grid grid-cols-8 items-end overflow-hidden">
                <svg class="w-40 h-3 justify-self-center" viewBox="0 0 160 12"><path d="M32 12 V2 H129 V12" fill="#fff" stroke="#b9c6d6" stroke-width="3"/><path d="M86 8 V12" stroke="#f0b060" stroke-width="3"/></svg>
            </div>

            <svg class="absolute inset-0 w-full h-full pointer-events-none" viewBox="0 0 2020 1477" aria-hidden="true">
                <path d="M1383 407 L1360 431 L1369 429 L1266 1092 H1269 L1386 432 L1394 437 Z" fill="#ff2113"/>
            </svg>
        </figure>

        <p class="h-[107px] mt-2 pb-1 flex items-center text-[51px] leading-[64px]">
            <span class="w-[102px] font-[Lato,sans-serif] text-[48px]">(c)</span>
            <span class="font-['Noto_Sans_CJK_SC',sans-serif] font-light">选择“仍要打开”</span>
        </p>

        <footer class="mt-[629px] pb-[200px] flex gap-[38px] text-[64px] leading-[72px] font-['Liberation_Serif',serif]">
            <span>—</span><span>12</span><span>—</span>
        </footer>
    </main>
</body>
</html>
